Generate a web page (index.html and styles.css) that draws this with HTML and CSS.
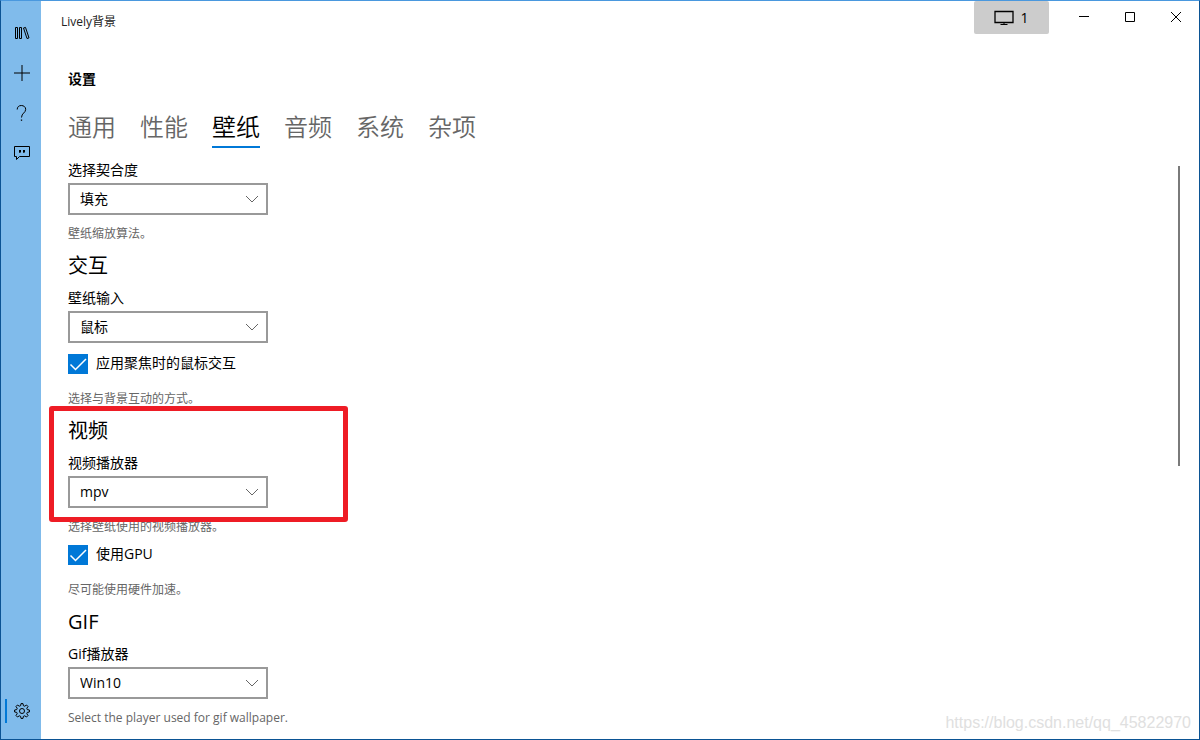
FILE: index.html
```
<!DOCTYPE html>
<html lang="zh-CN">
<head>
<meta charset="utf-8">
<title>Lively背景</title>
<link rel="stylesheet" href="styles.css">
</head>
<body>
<div class="window">
  <nav class="sidebar" aria-label="导航">
    <button class="nav-button" aria-label="壁纸库">
      <svg width="16" height="16" viewBox="0 0 16 16"><path d="M1.500 2.500h2v11h-2zM5.500 2.500h2v11h-2zM9.500 3l2-.600 3.500 10.500-2 .600z"/></svg>
    </button>
    <button class="nav-button" aria-label="添加壁纸">
      <svg width="16" height="16" viewBox="0 0 16 16"><path d="M8 0v16M0 8h16"/></svg>
    </button>
    <button class="nav-button" aria-label="帮助">
      <svg width="16" height="16" viewBox="0 0 16 16"><path d="M3.200 4.500C3.200 2 4.800.500 7.300.500s4.400 1.600 4.400 3.800c0 3.600-4.200 3.900-4.200 8.200"/><path d="M7.500 14.500v1.300" stroke-width="1.300"/></svg>
    </button>
    <button class="nav-button" aria-label="反馈">
      <svg width="16" height="16" viewBox="0 0 16 16"><path d="M.500 1.500h15v10H5.500l-3 3v-3h-2z"/><path class="solid" d="M5 5h2v2L6 8H5l.500-1H5zM9 5h2v2l-1 1H9l.500-1H9z"/></svg>
    </button>
    <button class="nav-button nav-settings" aria-label="设置" aria-current="page">
      <svg width="16" height="16" viewBox="0 0 16 16"><path d="M6.600 2.700 7 .600h2l.400 2.100 1.300.500 1.800-1.200 1.500 1.500-1.200 1.800.500 1.300 2.100.400v2l-2.100.400-.500 1.300 1.200 1.800-1.500 1.500-1.800-1.200-1.300.500-.400 2.100H7l-.400-2.100-1.300-.500L3.500 14 2 12.500l1.200-1.800-.500-1.300L.600 9V7l2.100-.400.500-1.300L2 3.500 3.500 2l1.800 1.200z"/><circle cx="8" cy="8" r="2.500"/></svg>
    </button>
  </nav>

  <main class="main">
    <header class="titlebar">
      <span class="app-name">Lively背景</span>
      <div class="window-controls">
        <button class="display-button">
          <svg width="20" height="16" viewBox="0 0 20 16"><path d="M1 1.500h18v11H1z" stroke-width="1.300"/><path d="M10 12.500v2M6.500 14.500h7"/></svg>
          <span>1</span>
        </button>
        <button class="caption-button" aria-label="最小化"><svg width="10" height="10" viewBox="0 0 10 10"><path d="M0 4.500h10"/></svg></button>
        <button class="caption-button" aria-label="最大化"><svg width="10" height="10" viewBox="0 0 10 10"><path d="M.500.500h9v9h-9z"/></svg></button>
        <button class="caption-button" aria-label="关闭"><svg width="10" height="10" viewBox="0 0 10 10"><path d="M0 0l10 10M10 0L0 10"/></svg></button>
      </div>
    </header>

    <h1 class="page-title">设置</h1>
    <div class="tabs" role="tablist">
      <button class="tab" role="tab">通用</button>
      <button class="tab" role="tab">性能</button>
      <button class="tab tab-active" role="tab" aria-selected="true">壁纸</button>
      <button class="tab" role="tab">音频</button>
      <button class="tab" role="tab">系统</button>
      <button class="tab" role="tab">杂项</button>
    </div>

    <div class="settings">
      <section>
        <label class="label" for="fit">选择契合度</label>
        <div class="combo">
          <select id="fit"><option>填充</option></select>
          <svg class="chevron" width="12" height="8" viewBox="0 0 12 8"><path d="M0 1l6 6 6-6"/></svg>
        </div>
        <p class="hint">壁纸缩放算法。</p>
      </section>

      <section>
        <h2 class="heading">交互</h2>
        <label class="label" for="input">壁纸输入</label>
        <div class="combo">
          <select id="input"><option>鼠标</option></select>
          <svg class="chevron" width="12" height="8" viewBox="0 0 12 8"><path d="M0 1l6 6 6-6"/></svg>
        </div>
        <div class="check-row">
          <span class="check"><input type="checkbox" id="focus" checked><svg width="20" height="20" viewBox="0 0 20 20"><path d="M2.500 10.500l5 5L18 5"/></svg></span>
          <label for="focus">应用聚焦时的鼠标交互</label>
        </div>
        <p class="hint hint-check">选择与背景互动的方式。</p>
      </section>

      <section>
        <div class="marked">
          <h2 class="heading">视频</h2>
          <label class="label" for="video">视频播放器</label>
          <div class="combo">
            <select id="video"><option>mpv</option></select>
            <svg class="chevron" width="12" height="8" viewBox="0 0 12 8"><path d="M0 1l6 6 6-6"/></svg>
          </div>
        </div>
        <p class="hint">选择壁纸使用的视频播放器。</p>
        <div class="check-row">
          <span class="check"><input type="checkbox" id="gpu" checked><svg width="20" height="20" viewBox="0 0 20 20"><path d="M2.500 10.500l5 5L18 5"/></svg></span>
          <label for="gpu">使用GPU</label>
        </div>
        <p class="hint hint-check">尽可能使用硬件加速。</p>
      </section>

      <section>
        <h2 class="heading">GIF</h2>
        <label class="label" for="gif">Gif播放器</label>
        <div class="combo">
          <select id="gif"><option>Win10</option></select>
          <svg class="chevron" width="12" height="8" viewBox="0 0 12 8"><path d="M0 1l6 6 6-6"/></svg>
        </div>
        <p class="hint">Select the player used for gif wallpaper.</p>
      </section>
      <div class="scroll-thumb"></div>
    </div>
    <span class="watermark">https://blog.csdn.net/qq_45822970</span>
  </main>
</div>
</body>
</html>
```
FILE: styles.css
```
*, *::before, *::after { box-sizing: border-box; }

body {
  margin: 0;
  font: 14px/20px "Open Sans", "Noto Sans CJK SC", sans-serif;
  color: #000;
  background: #fff;
}

button, select {
  font: inherit;
  color: inherit;
  border: 0;
  padding: 0;
  background: none;
}

h1, h2, p { margin: 0; }

svg {
  display: block;
  fill: none;
  stroke: #000;
  stroke-width: 1;
}

.window {
  display: flex;
  height: 100vh;
  border: 1px solid #0b5394;
  border-top-color: #4a98de;
}

.sidebar {
  display: flex;
  flex-direction: column;
  flex: none;
  width: 40px;
  padding: 12px 0 8px;
  background: #80bbeb;
}

.nav-button {
  display: grid;
  place-items: center;
  width: 40px;
  height: 40px;
  padding-left: 2px;
}

.solid { fill: #000; stroke: none; }

.nav-settings {
  position: relative;
  margin-top: auto;
}

.nav-settings::before {
  content: "";
  position: absolute;
  left: 4px;
  top: 8px;
  width: 2px;
  height: 24px;
  background: #0078d7;
}

.main {
  position: relative;
  display: flex;
  flex-direction: column;
  flex: 1;
  min-width: 0;
}

.titlebar {
  display: flex;
  justify-content: space-between;
  height: 40px;
  padding-left: 20px;
  font-size: 12px;
}

.app-name { padding-top: 11px; color: #222; }

.window-controls { display: flex; }

.display-button {
  display: flex;
  align-items: center;
  justify-content: center;
  gap: 6px;
  width: 75px;
  height: 33px;
  margin-right: 12px;
  border-radius: 2px;
  background: #ccc;
  font-size: 14px;
}

.caption-button {
  display: grid;
  place-items: center;
  width: 46px;
  height: 32px;
}

.page-title {
  padding: 28px 27px 0;
  font-size: 14px;
  font-weight: 700;
  line-height: 20px;
}

.tabs {
  display: flex;
  gap: 24px;
  padding: 20px 27px 0;
}

.tab {
  height: 39px;
  padding-bottom: 1px;
  border-bottom: 2px solid transparent;
  font-size: 24px;
  font-weight: 350;
  line-height: 36px;
  color: #666;
}

.tab-active { color: #000; border-color: #0078d7; }

.settings {
  position: relative;
  flex: 1;
  min-height: 0;
  padding: 12px 27px 0;
  overflow: hidden;
}

.label { display: block; }

.combo {
  position: relative;
  width: 200px;
  margin-top: 3px;
}

.combo select {
  display: block;
  appearance: none;
  width: 100%;
  height: 32px;
  padding: 0 32px 0 10px;
  border: 2px solid #999;
  border-radius: 0;
  background: #fff;
}

.chevron {
  position: absolute;
  right: 10px;
  top: 12px;
  stroke: #666;
  pointer-events: none;
}

.hint {
  margin-top: 11px;
  font-size: 12px;
  line-height: 16px;
  color: #666;
}

.hint-check { margin-top: 17px; }

.heading {
  padding-top: 10px;
  margin-bottom: 8px;
  font-size: 20px;
  font-weight: 400;
  line-height: 28px;
}

.check-row {
  display: flex;
  gap: 8px;
  height: 20px;
  margin-top: 11px;
  line-height: 18px;
}

.hint + .check-row { margin-top: 10px; }

.check { position: relative; width: 20px; height: 20px; }

.check input {
  display: block;
  appearance: none;
  width: 20px;
  height: 20px;
  margin: 0;
  background: #0078d7;
}

.check svg {
  position: absolute;
  inset: 0;
  stroke: #fff;
  stroke-width: 1.5;
  pointer-events: none;
}

.marked { position: relative; }

.marked::after {
  content: "";
  position: absolute;
  left: -19px;
  top: -1px;
  bottom: -14px;
  width: 299px;
  border: 5px solid #ee1c25;
  border-radius: 3px;
  pointer-events: none;
}

.scroll-thumb {
  position: absolute;
  right: 19px;
  top: 18px;
  width: 2px;
  height: 300px;
  background: #7a7a7a;
}

.watermark {
  position: absolute;
  right: 8px;
  bottom: 6px;
  font-family: "Liberation Sans", sans-serif;
  font-size: 16px;
  color: #e0e0e0;
}
```
